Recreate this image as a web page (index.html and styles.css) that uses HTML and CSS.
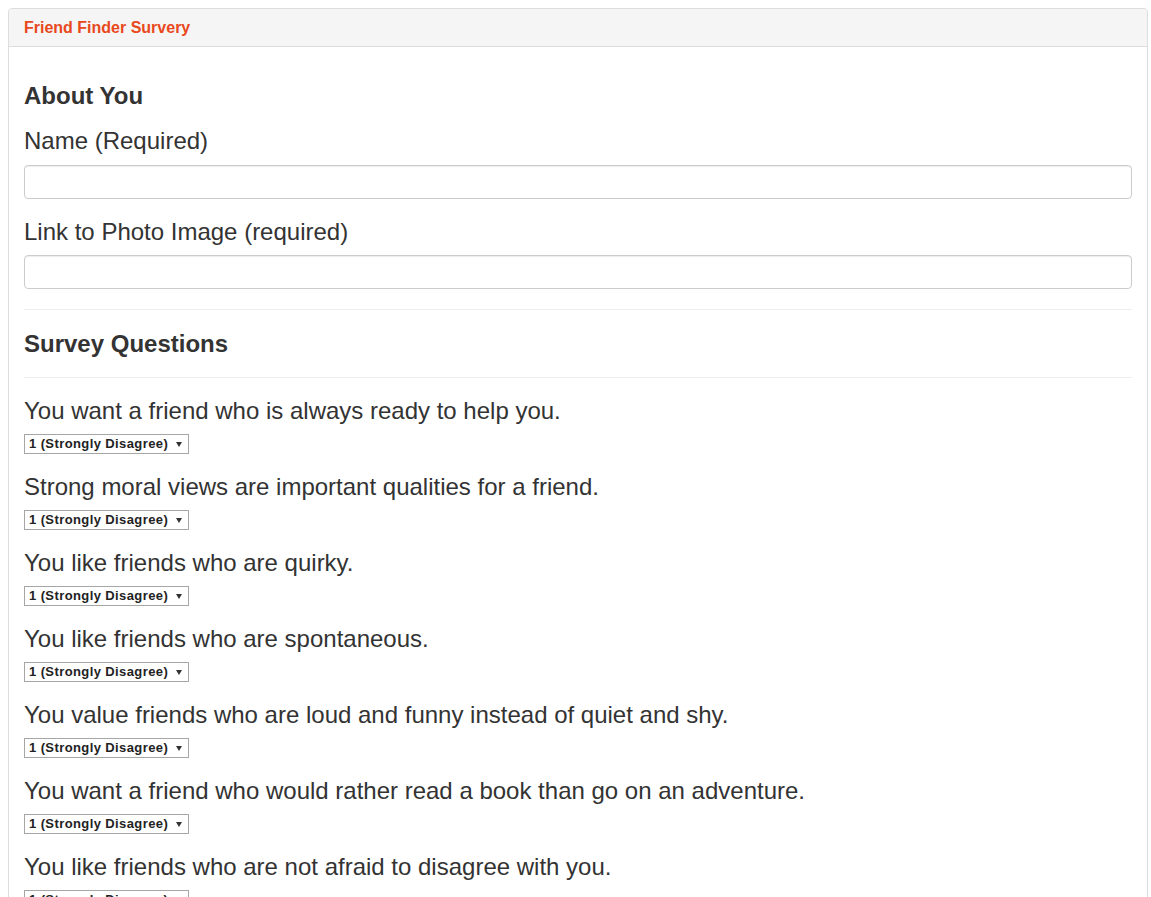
FILE: index.html
```html
<!DOCTYPE html>
<html lang="en">
<head>
<meta charset="utf-8">
<title>Friend Finder Survey</title>
<link rel="stylesheet" href="styles.css">
</head>
<body>
<div class="panel">
  <div class="panel-heading"><h3 class="panel-title">Friend Finder Survery</h3></div>
  <div class="panel-body">
    <h3 class="section-title">About You</h3>
    <h3 class="label">Name (Required)</h3>
    <input class="form-control" type="text">
    <h3 class="label">Link to Photo Image (required)</h3>
    <input class="form-control" type="text">
    <hr>
    <h3 class="section-title">Survey Questions</h3>
    <hr>
    <h3 class="label question">You want a friend who is always ready to help you.</h3>
    <div class="select"><select><option>1 (Strongly Disagree)</option><option>2</option><option>3</option><option>4</option><option>5 (Strongly Agree)</option></select></div>
    <h3 class="label question">Strong moral views are important qualities for a friend.</h3>
    <div class="select"><select><option>1 (Strongly Disagree)</option><option>2</option><option>3</option><option>4</option><option>5 (Strongly Agree)</option></select></div>
    <h3 class="label question">You like friends who are quirky.</h3>
    <div class="select"><select><option>1 (Strongly Disagree)</option><option>2</option><option>3</option><option>4</option><option>5 (Strongly Agree)</option></select></div>
    <h3 class="label question">You like friends who are spontaneous.</h3>
    <div class="select"><select><option>1 (Strongly Disagree)</option><option>2</option><option>3</option><option>4</option><option>5 (Strongly Agree)</option></select></div>
    <h3 class="label question">You value friends who are loud and funny instead of quiet and shy.</h3>
    <div class="select"><select><option>1 (Strongly Disagree)</option><option>2</option><option>3</option><option>4</option><option>5 (Strongly Agree)</option></select></div>
    <h3 class="label question">You want a friend who would rather read a book than go on an adventure.</h3>
    <div class="select"><select><option>1 (Strongly Disagree)</option><option>2</option><option>3</option><option>4</option><option>5 (Strongly Agree)</option></select></div>
    <h3 class="label question">You like friends who are not afraid to disagree with you.</h3>
    <div class="select"><select><option>1 (Strongly Disagree)</option><option>2</option><option>3</option><option>4</option><option>5 (Strongly Agree)</option></select></div>
    <h3 class="label question">You prefer friends who keep their plans organized.</h3>
    <div class="select"><select><option>1 (Strongly Disagree)</option><option>2</option><option>3</option><option>4</option><option>5 (Strongly Agree)</option></select></div>
    <h3 class="label question">You enjoy friends who love the outdoors.</h3>
    <div class="select"><select><option>1 (Strongly Disagree)</option><option>2</option><option>3</option><option>4</option><option>5 (Strongly Agree)</option></select></div>
    <h3 class="label question">You want a friend who shares your sense of humor.</h3>
    <div class="select"><select><option>1 (Strongly Disagree)</option><option>2</option><option>3</option><option>4</option><option>5 (Strongly Agree)</option></select></div>
    <button class="btn" type="button">Submit</button>
  </div>
</div>
</body>
</html>
```

FILE: styles.css
```css
* { box-sizing: border-box; }
body {
  margin: 8px 3px 8px 8px;
  font-family: "Liberation Sans", Arial, Helvetica, sans-serif;
  font-size: 14px;
  line-height: 1.42857;
  color: #333;
  background: #fff;
}
.panel {
  border: 1px solid #ddd;
  border-radius: 4px;
  background: #fff;
  box-shadow: 0 1px 1px rgba(0,0,0,0.05);
}
.panel-heading {
  background: #f5f5f5;
  border-bottom: 1px solid #ddd;
  border-radius: 3px 3px 0 0;
  padding: 10px 15px;
}
.panel-title {
  margin: 0;
  font-size: 16px;
  line-height: 17px;
  font-weight: bold;
  color: #e8481c;
}
.panel-body {
  padding: 15px;
}
.section-title, .label {
  margin: 20px 0 10px;
  font-size: 24px;
  line-height: 1.1;
  font-weight: bold;
  color: #333;
}
.section-title { padding-top: 2px; line-height: 24.4px; }
.label { font-weight: normal; }
.question { line-height: 26px; }
.form-control {
  display: block;
  width: 100%;
  height: 34px;
  padding: 6px 12px;
  font: inherit;
  border: 1px solid #ccc;
  border-radius: 4px;
  box-shadow: inset 0 1px 1px rgba(0,0,0,0.075);
  background: #fff;
}
hr {
  margin: 20px 0;
  border: 0;
  border-top: 1px solid #eee;
  height: 0;
}
.select {
  position: relative;
  display: block;
  width: 165px;
  height: 20px;
}
.select select {
  appearance: none;
  -webkit-appearance: none;
  width: 165px;
  height: 20px;
  padding: 0 0 0 4px;
  border: 1px solid #a6a6a6;
  border-radius: 0;
  background: #fff;
  font-family: "Liberation Sans", Arial, sans-serif;
  font-size: 13px;
  letter-spacing: 0.4px;
  font-weight: bold;
  color: #222;
}
.select::after {
  content: "";
  position: absolute;
  right: 7px;
  top: 8px;
  border-left: 3px solid transparent;
  border-right: 3px solid transparent;
  border-top: 5px solid #333;
  pointer-events: none;
}
.btn {
  margin-top: 20px;
  padding: 6px 12px;
  font: inherit;
  border: 1px solid #ccc;
  border-radius: 4px;
  background: #fff;
  color: #333;
}
```
